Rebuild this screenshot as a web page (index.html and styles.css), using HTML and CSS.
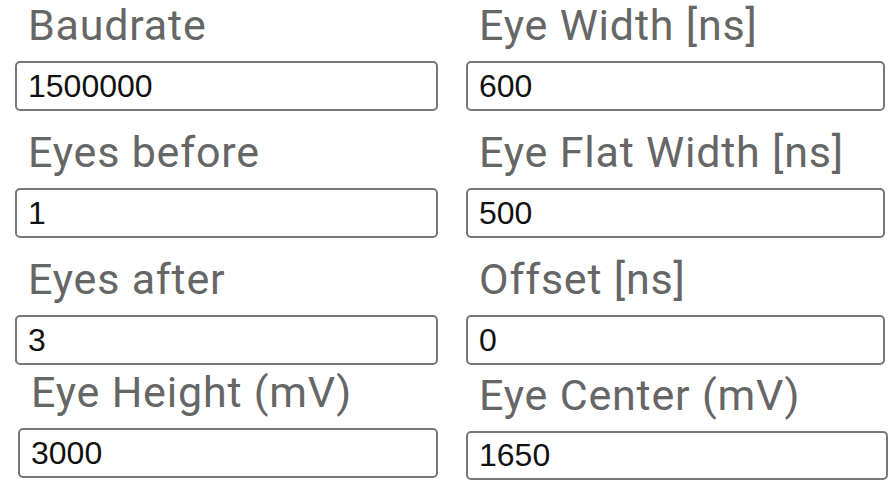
FILE: index.html
```html
<!DOCTYPE html>
<html lang="en">
<head>
<meta charset="utf-8">
<title>Eye settings</title>
<link rel="stylesheet" href="styles.css">
</head>
<body>
<div class="form">
  <div class="col col--left">
    <div class="field">
      <label class="field__label">Baudrate</label>
      <input class="field__input" type="text" value="1500000">
    </div>
    <div class="field">
      <label class="field__label">Eyes before</label>
      <input class="field__input" type="text" value="1">
    </div>
    <div class="field">
      <label class="field__label">Eyes after</label>
      <input class="field__input" type="text" value="3">
    </div>
    <div class="field field--last-left">
      <label class="field__label">Eye Height (mV)</label>
      <input class="field__input" type="text" value="3000">
    </div>
  </div>
  <div class="col col--right">
    <div class="field">
      <label class="field__label">Eye Width [ns]</label>
      <input class="field__input" type="text" value="600">
    </div>
    <div class="field">
      <label class="field__label">Eye Flat Width [ns]</label>
      <input class="field__input" type="text" value="500">
    </div>
    <div class="field">
      <label class="field__label">Offset [ns]</label>
      <input class="field__input" type="text" value="0">
    </div>
    <div class="field field--last-right">
      <label class="field__label">Eye Center (mV)</label>
      <input class="field__input" type="text" value="1650">
    </div>
  </div>
</div>
</body>
</html>
```

FILE: styles.css
```css
html, body {
  margin: 0;
  padding: 0;
  background: #ffffff;
}

.form {
  display: flex;
  width: 891px;
  height: 489px;
  overflow: hidden;
}

.col {
  display: flex;
  flex-direction: column;
  gap: 16px;
}

.col--left {
  margin-left: 15px;
  width: 423px;
}

.col--right {
  margin-left: 28px;
  width: 419px;
}

.field {
  display: flex;
  flex-direction: column;
}

.field__label {
  display: block;
  height: 61px;
  box-sizing: border-box;
  padding-left: 13px;
  font-family: "Roboto", "Liberation Sans", sans-serif;
  font-size: 43px;
  line-height: 50px;
  color: #666666;
  letter-spacing: 0.8px;
  white-space: nowrap;
}

.field__input {
  display: block;
  box-sizing: border-box;
  width: 100%;
  height: 50px;
  margin: 0;
  padding: 0 0 0 11px;
  border: 2px solid #777777;
  border-radius: 5px;
  background: #ffffff;
  font-family: "Liberation Sans", Arial, sans-serif;
  font-size: 32px;
  color: #111111;
  outline: none;
}

.field--last-left {
  margin-top: -14px;
  margin-left: 3px;
}

.field--last-right {
  margin-top: -11px;
  margin-right: -3px;
}

.field--last-right .field__input {
  height: 49px;
}
```
